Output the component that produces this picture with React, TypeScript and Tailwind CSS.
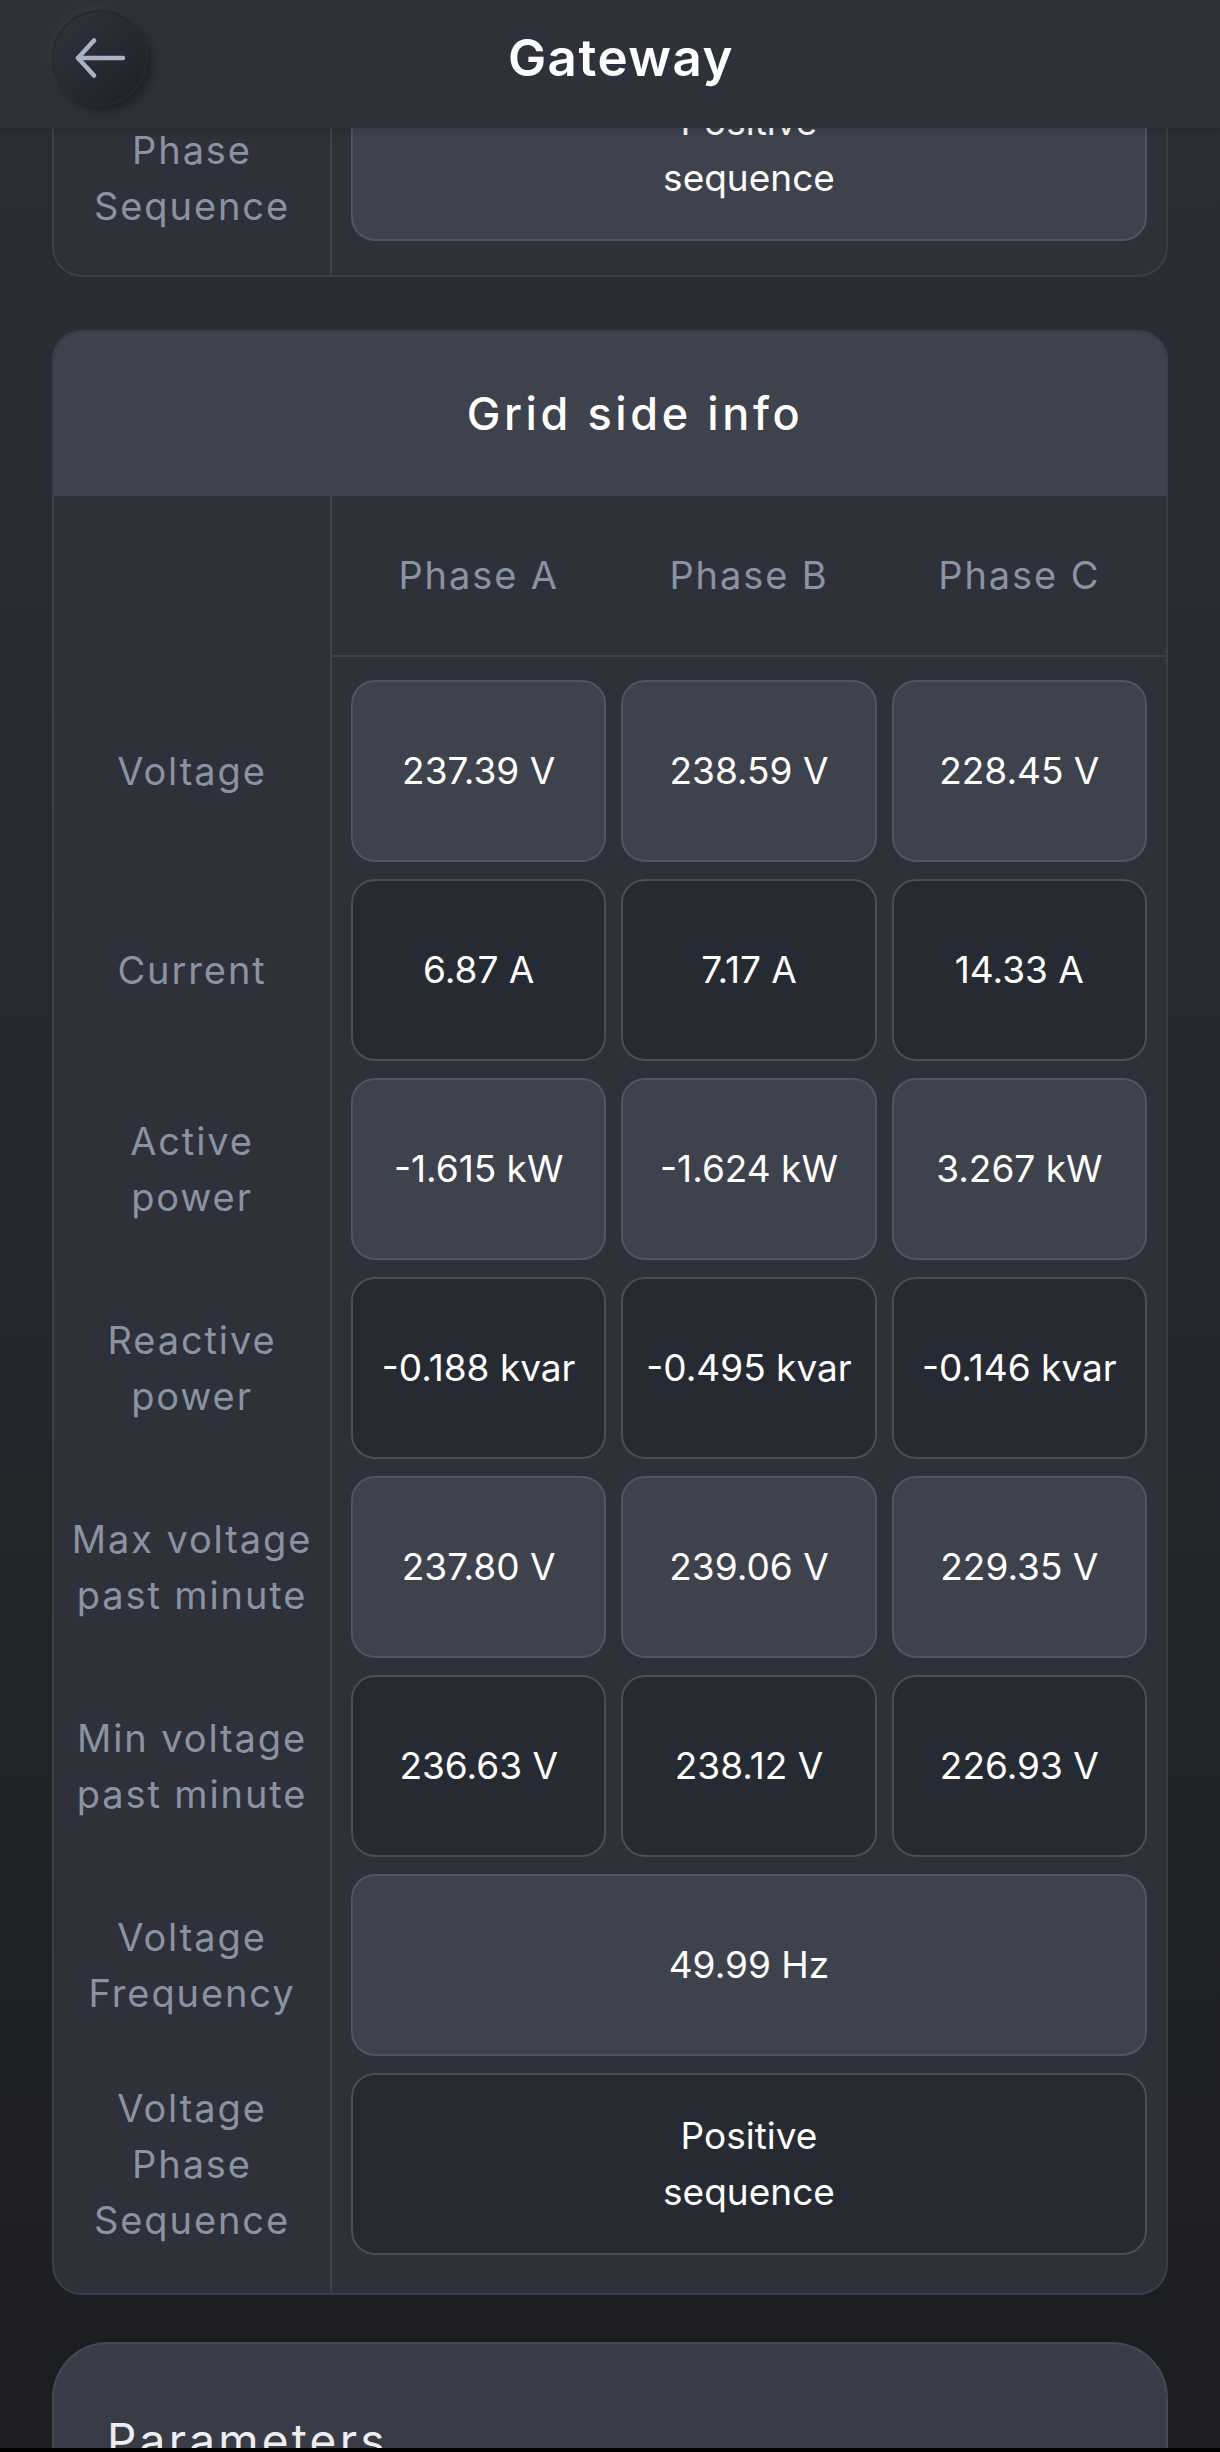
import React from "react";

type Row = {
  label: string[];
  values?: string[];
  span?: string[];
};

const rows: Row[] = [
  { label: ["Voltage"], values: ["237.39 V", "238.59 V", "228.45 V"] },
  { label: ["Current"], values: ["6.87 A", "7.17 A", "14.33 A"] },
  { label: ["Active", "power"], values: ["-1.615 kW", "-1.624 kW", "3.267 kW"] },
  { label: ["Reactive", "power"], values: ["-0.188 kvar", "-0.495 kvar", "-0.146 kvar"] },
  { label: ["Max voltage", "past minute"], values: ["237.80 V", "239.06 V", "229.35 V"] },
  { label: ["Min voltage", "past minute"], values: ["236.63 V", "238.12 V", "226.93 V"] },
  { label: ["Voltage", "Frequency"], span: ["49.99 Hz"] },
  { label: ["Voltage", "Phase", "Sequence"], span: ["Positive", "sequence"] },
];

function Label({ lines }: { lines: string[] }) {
  return (
    <div className="h-[182px] flex flex-col items-center justify-center text-center text-[38px] leading-[56px] tracking-[0.05em] text-[#8a93a3]">
      {lines.map((l) => (
        <span key={l} className="whitespace-nowrap">{l}</span>
      ))}
    </div>
  );
}

function Box({ lines, light, wide }: { lines: string[]; light: boolean; wide?: boolean }) {
  return (
    <div
      className={
        "h-[182px] rounded-[24px] border-2 flex flex-col items-center justify-center text-center text-[37px] leading-[56px] text-white " +
        (light ? "bg-[#3e424d] border-[#50555f]" : "bg-[#262a32] border-[#494e58]") +
        (wide ? " col-span-3" : "")
      }
    >
      {lines.map((l) => (
        <span key={l} className="whitespace-nowrap">{l}</span>
      ))}
    </div>
  );
}

function BackButton() {
  return (
    <button className="w-[96px] h-[96px] shrink-0 rounded-full border-2 border-[#262930] bg-gradient-to-br from-[#31343d] to-[#1d2025] flex items-center justify-center shadow-[-3px_-3px_8px_rgba(255,255,255,0.04),4px_5px_10px_rgba(0,0,0,0.35)]">
      <svg width="52" height="40" viewBox="0 0 52 40" fill="none" stroke="#a9b3c6" strokeWidth="4.5" strokeLinecap="round" strokeLinejoin="round">
        <path d="M49 20H4" />
        <path d="M20 2.5 4 20l16 17.5" />
      </svg>
    </button>
  );
}

export default function App() {
  return (
    <div className="relative h-[2452px] overflow-hidden bg-black font-['Inter',sans-serif]">
      {/* Top bar */}
      <header className="absolute inset-x-0 top-0 z-10 h-[128px] bg-[#2e313a] shadow-[0_2px_8px_rgba(0,0,0,0.18)] flex items-center px-[52px] pb-[12px]">
        <BackButton />
        <h1 className="flex-1 text-center text-[51px] font-semibold tracking-[0.03em] text-white">Gateway</h1>
        <div className="w-[74px]" />
      </header>

      <main className="h-[2448px] overflow-hidden bg-gradient-to-b from-[#2b2e36] via-[#25282e] to-[#1b1d21] px-[52px]">
        {/* Previous card, scrolled mostly out of view */}
        <section className="flex rounded-b-[30px] border-2 border-t-0 border-[#3b3f49] bg-[#2e3139]">
          <div className="w-[278px] border-r-2 border-[#3e424c] pt-[59px] pb-[34px]">
            <Label lines={["Voltage", "Phase", "Sequence"]} />
          </div>
          <div className="flex-1 pt-[59px] pb-[34px] pl-[19px] pr-[19px]">
            <Box lines={["Positive", "sequence"]} light />
          </div>
        </section>

        {/* Grid side info */}
        <section className="mt-[53px] rounded-[30px] border-2 border-[#3b3f49] bg-[#2e3139] overflow-hidden">
          <div className="h-[164px] bg-[#3e424d] flex items-center justify-center pl-[50px]">
            <h2 className="text-[45px] font-medium tracking-[0.08em] text-white">Grid side info</h2>
          </div>
          <div className="flex">
            <div className="w-[278px] border-r-2 border-[#3e424c] flex flex-col pb-[38px]">
              <div className="h-[161px]" />
              <div className="pt-[23px] flex flex-col gap-[17px]">
                {rows.map((r) => (
                  <Label key={r.label.join(" ")} lines={r.label} />
                ))}
              </div>
            </div>
            <div className="flex-1 flex flex-col pb-[38px]">
              <div className="h-[161px] border-b-2 border-[#3e424c] grid grid-cols-3 gap-[15px] px-[19px] items-center">
                {["Phase A", "Phase B", "Phase C"].map((p) => (
                  <div key={p} className="text-center text-[38px] tracking-[0.05em] text-[#8a93a3]">{p}</div>
                ))}
              </div>
              <div className="pt-[23px] px-[19px] grid grid-cols-3 gap-x-[15px] gap-y-[17px]">
                {rows.map((r, i) =>
                  r.span ? (
                    <Box key={i} lines={r.span} light={i % 2 === 0} wide />
                  ) : (
                    r.values!.map((v) => <Box key={i + v} lines={[v]} light={i % 2 === 0} />)
                  )
                )}
              </div>
            </div>
          </div>
        </section>

        {/* Parameters */}
        <section className="mt-[47px] h-[400px] rounded-t-[56px] border-2 border-b-0 border-[#454954] bg-gradient-to-b from-[#3a3d47] to-[#363943] pl-[53px] pt-[63px]">
          <h2 className="text-[46px] leading-[66px] tracking-[0.07em] text-[#eceef1]">Parameters</h2>
        </section>
      </main>
      <div className="h-[4px] bg-black" />
    </div>
  );
}
